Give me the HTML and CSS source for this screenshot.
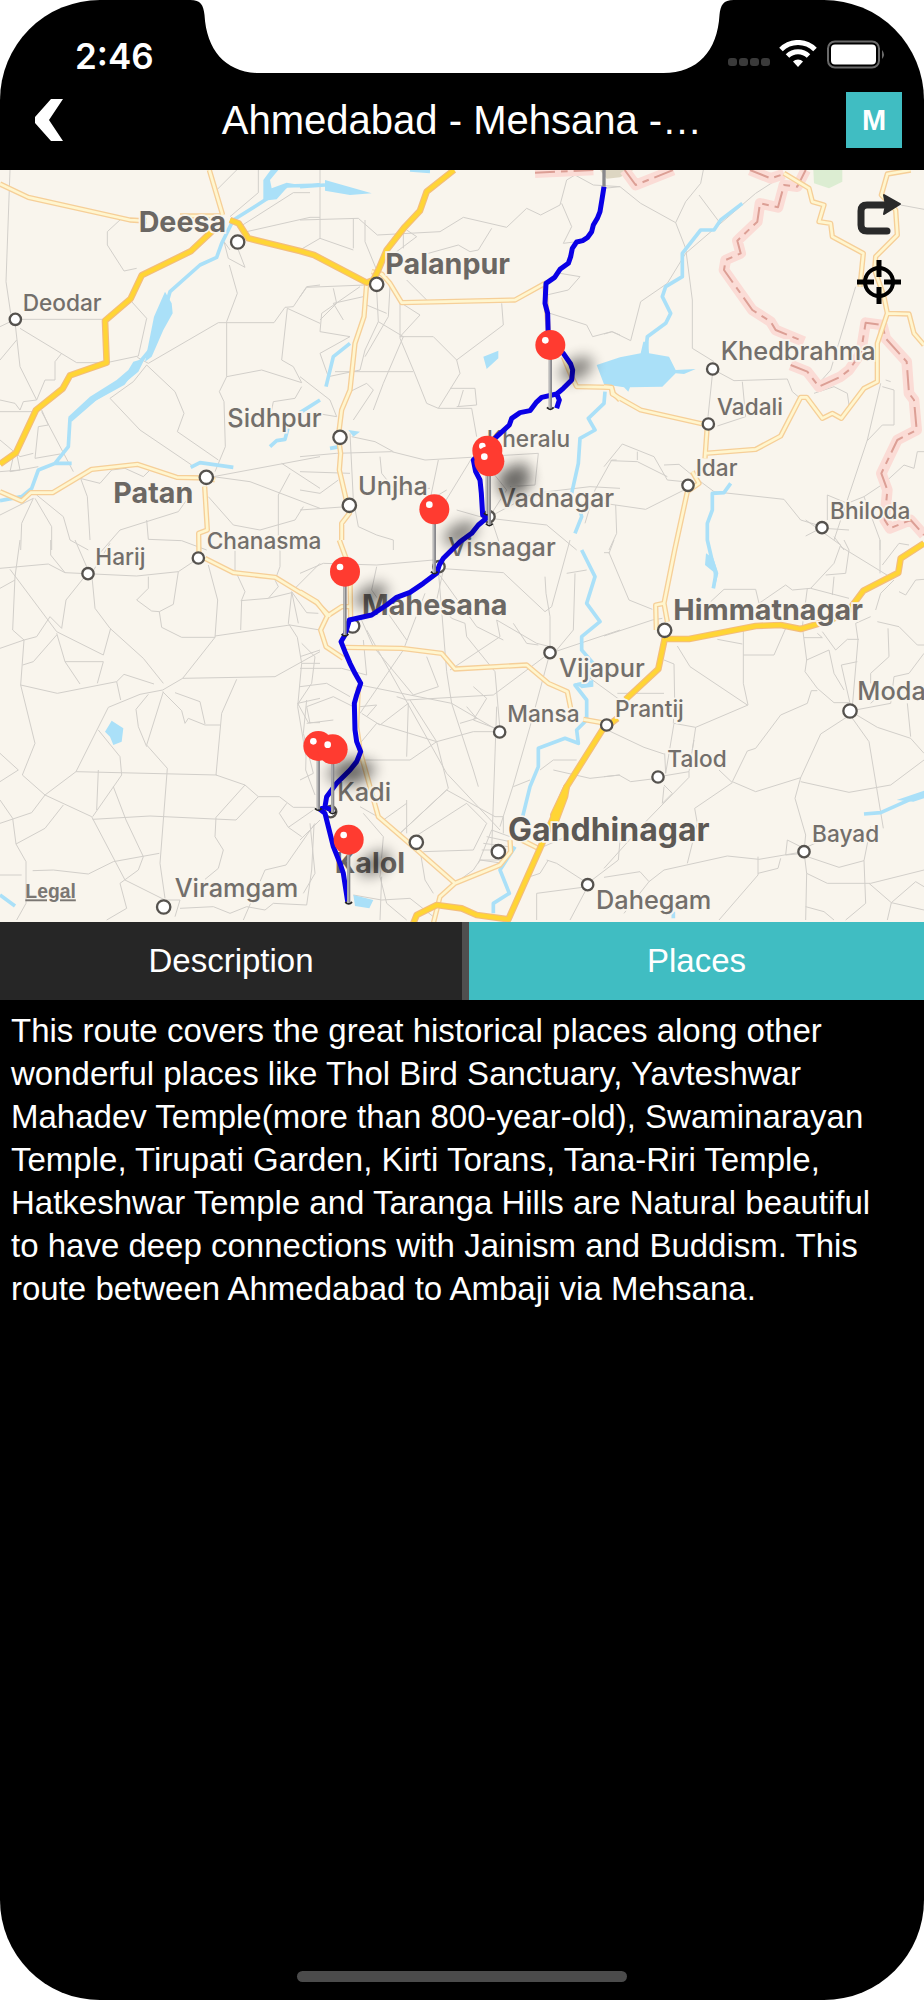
FILE: index.html
```
<!DOCTYPE html>
<html lang="en">
<head>
    <meta charset="UTF-8">
    <meta name="viewport" content="width=device-width, initial-scale=1.0">
    <title>Ahmedabad - Mehsana - Ambaji</title>
    <link rel="stylesheet" href="styles.css">
</head>
<body>
<div class="phone">
    <!-- Notch -->
    <svg class="notch" viewBox="190 0 543 74" aria-hidden="true">
        <path d="M190 0C200 0 203 5 204 15C206 51 226 73 259 73H663C697 73 717 51 719 15C720 5 723 0 733 0Z"/>
    </svg>

    <!-- Status bar -->
    <div class="status">
        <span class="time">2:46</span>
        <svg class="status-icons" width="160" height="32" viewBox="0 0 160 32" aria-hidden="true">
            <g fill="#3a3a3a">
                <rect x="2" y="18" width="9" height="8" rx="3"/>
                <rect x="13" y="18" width="9" height="8" rx="3"/>
                <rect x="24" y="18" width="9" height="8" rx="3"/>
                <rect x="35" y="18" width="9" height="8" rx="3"/>
            </g>
            <g fill="none" stroke="#fff" stroke-width="5">
                <path d="M55 9.500A24 24 0 0 1 89 9.500"/>
                <path d="M61.500 16A15 15 0 0 1 82.500 16"/>
            </g>
            <path fill="#fff" d="M67 21.500A7 7 0 0 1 77 21.500L72 27Z"/>
            <rect x="102" y="1.500" width="51" height="26" rx="7" fill="none" stroke="#6a6a6a" stroke-width="2"/>
            <rect x="105" y="4.500" width="45" height="20" rx="4" fill="#fff"/>
            <path fill="#6a6a6a" d="M156 10Q160 14.500 156 19Z"/>
        </svg>
    </div>

    <!-- Navigation bar -->
    <header class="nav">
        <button class="back" aria-label="Back">
            <svg width="30" height="44" viewBox="0 0 30 44"><path fill="#fff" d="M17 1H29L15 22L29 43H17L1 25V19Z"/></svg>
        </button>
        <h1>Ahmedabad - Mehsana -…</h1>
        <button class="mode">M</button>
    </header>

    <main>
        <div class="map">
            <svg class="map-canvas" viewBox="0 0 2772 2256">
                <defs>
                    <filter id="blur" x="-80%" y="-100%" width="260%" height="300%"><feGaussianBlur stdDeviation="20"/></filter>
                    <g id="pin">
                        <ellipse class="shadow" cx="78" cy="-118" rx="54" ry="30" transform="rotate(-28 78 -118)"/>
                        <path class="tip" d="M-10 -3Q0 8 10 -3"/>
                        <path class="stick" d="M0 -150V0"/>
                        <path class="shine" d="M-2 -150V0"/>
                        <circle class="head" cy="-190" r="45"/>
                        <circle cx="-15" cy="-204" r="10" fill="#fff"/>
                    </g>
                    <g id="secondary">
                        <path d="M0 42L85 82L390 150L440 153M628 0L668 135M540 138H660M0 965L65 993L92 968H158L275 898L412 883L530 922L620 924L645 930M614 950L622 1080L596 1090L597 1160"/>
                        <g transform="translate(900 0)">
                            <path d="M200 340L192 440L165 520L150 660L125 720L115 800L122 850L118 900L148 1030L125 1060V1110M215 305L245 312L270 340L305 398L645 390L735 340L738 400L745 480M790 560L815 620L830 650L935 652L940 670L960 690"/>
                        </g>
                        <g transform="translate(1812 0)">
                            <path d="M0 650L22 652L25 672L110 720L310 765L303 865M303 850L455 838L530 798L590 682H608L655 745L685 730L712 745L780 655L820 635V520L850 430L915 432L930 490L960 525M850 430L840 380L812 300L815 260L880 195L875 120L832 75L850 12L920 0M540 10L615 55L625 95L660 105L645 155L680 160L685 200L778 250L768 350M265 905L285 940L250 965L212 1140L180 1300L190 1355M180 1300L155 1305L157 1380"/>
                        </g>
                        <path d="M615 1165L700 1208L826 1222L950 1298L990 1340"/>
                        <g transform="translate(900 1110)">
                            <path d="M0 155L50 185L82 228L62 270L78 320L130 355M82 228L125 200H150M118 0L140 60L150 100L152 240M135 322L305 325L425 340L465 387L680 375L745 430L802 455L812 505M850 538L905 548M175 440L170 560L182 640L235 830L345 925L465 1030L600 975L632 935L630 900M465 1030L420 1070L400 1150M665 900L715 925"/>
                        </g>
                    </g>
                    <g id="highways">
                        <path d="M0 882L48 848L108 720L188 656L210 616L320 578L315 452L392 386L425 316L572 244L640 180M690 150L716 160L745 205L900 243L942 255L1100 338L1120 330L1135 300L1160 240L1215 170L1260 122L1280 65L1362 0"/>
                        <g transform="translate(1812 1110)">
                            <path d="M960 10L890 55L883 98L778 152L735 210L680 240L590 267L530 255L455 258L255 297H182L163 387L65 478M40 535L-5 570L-112 740L-192 925L-287 1138L-382 1125L-427 1105L-502 1095L-562 1125L-572 1150"/>
                        </g>
                        <path d="M1700 1850L1660 1935L1665 1960L1695 1880Z"/>
                    </g>
                    <g id="border">
                        <path d="M1605 8L1780 0M1874 0L1907 45L2020 0M2250 0L2312 25L2352 12M2417 0L2392 50L2352 45L2334 112L2280 100L2272 155L2212 212L2222 250L2177 270L2172 300L2257 420L2312 455L2327 480L2412 515M2372 585L2422 605L2457 650L2522 620L2547 600L2582 550L2597 458L2647 465L2657 505L2720 575L2727 670L2742 690L2750 780L2692 810L2644 910L2662 960L2654 1050L2670 1075L2732 1050L2772 1095"/>
                    </g>
                </defs>

                <!-- Parks -->
                <path fill="#dcedd2" d="M2440 0H2527V35L2487 55L2442 40Z"/>
                <path fill="#ddd6c2" d="M1800 0H1900L1860 22L1820 26Z"/>

                <!-- Minor roads -->
                <g class="minor">
                    <path d="M30 0L18 335L32 430M46 465L60 590L110 690M0 725H108M0 470L46 448H315M60 475L230 578L320 578L415 558L440 445L395 395M362 148L322 185V225L372 303L410 295M775 0V68L690 140M710 0L650 60M720 170L880 68H930M740 185L930 142H960M690 240L672 215L685 265L735 292L715 240M688 285L712 370L680 455V620L658 665L672 695L676 830L645 905M680 458H655L445 580L412 562M680 458H822L855 412L880 410L920 350L960 345M440 585L525 665L552 730L532 785L655 870M440 585L400 635L330 685L420 780L575 885M680 620L785 600L905 638L880 590L845 570L862 415L960 460M905 650L885 685L820 695L815 720M640 920L960 860M640 920L750 935L960 1015M845 880L960 955M870 910L835 975V1140M910 1010L885 1050L780 1080L700 1065L625 980M560 990L535 1025L360 1080L290 1160M440 1050L445 1108L545 1112L620 1140M0 1035L100 985L65 1060L62 1140M105 985L155 1070V1140M110 975L190 1040L210 1110L265 1140M240 920L262 980L270 1110M50 510L0 570M125 725L220 905M105 865L115 770L145 765L125 720M105 865L180 852M0 810L60 860L100 850M50 850L60 900L0 905M40 860L30 905L60 900L115 890M0 690L45 700L60 720L70 695L110 690L135 630H165V575L185 550M240 925L300 940L335 900L375 895L430 920L450 900"/>
                    <g transform="translate(900 0)">
                        <path d="M60 0V205L0 240M60 205L160 240M0 150L175 145L232 195L420 185L490 142L620 172L680 115L722 135L780 105L800 30L825 15L880 45L960 50M160 145V235M195 150V215L230 300M320 180L350 200L290 245L260 285M310 180V235M575 175L535 240L510 245L475 225L385 250M785 100L815 170L790 220L830 215M0 380L20 352L195 345M180 350L65 430L60 485L150 500M100 355L110 400L60 450M190 380L100 400L130 450M230 360L235 455L310 500L250 640L220 720M270 350L265 440L195 560M300 400V505L342 605L380 700L415 715L515 715L530 800M320 330L380 390M305 400L360 435L300 500M200 405L260 430M300 500H400L470 570L480 610L415 715M470 570L610 465L605 400M740 375L805 360L840 320L780 310M750 430L860 465L878 500L935 485L960 495M450 655H525L530 705L470 710M490 660L475 710M105 605H340M60 550L150 500M60 550L85 620L180 600L195 540L235 455M0 620L90 690L110 740L50 730M150 665L200 640L220 660L160 750M0 860L110 850L275 845L375 870L715 850L705 945L630 950M150 790L160 990L175 1070L230 1095L280 1110V1140M155 800L225 815L280 845M415 870L390 990L440 960M515 865L420 1020M0 905L150 910M0 960L60 970L115 930M0 1020L140 1010M240 860L245 910L285 960L390 955M570 1040L700 970L870 950L960 955M570 1045L740 1065L830 1140M575 1050L605 1140M575 1050L470 1020M575 1030L620 960L580 910M950 870H935L885 960L855 1060"/>
                    </g>
                    <g transform="translate(1812 0)">
                        <path d="M0 55L48 50L110 100L215 158L245 235L265 390V535L330 575M540 15L455 70L245 250L190 340L110 395L80 512L25 485L0 492M215 158L245 95L290 40L298 0M285 75L345 155M755 350L680 600L640 645M890 105L960 118M325 615L312 740M340 605L390 632L550 627L565 665L585 682M415 635L425 740L340 768M630 670L690 650L730 670L735 705M830 640L790 810L690 1110M835 650L870 660V765H835L790 812M0 890L55 822L150 860L190 930L240 935M20 872L100 875L190 920M100 845V870M180 885L225 883L270 920L330 965L540 988L590 1050L640 1065M250 955L125 1018L0 1000M35 1005L38 1090L15 1140M960 845H940L930 895L900 885L840 940L780 980L730 1000L670 975V1050M660 1075L735 1080M640 1080L605 1098M690 1100L720 1140M780 980L828 1110V1140M845 630L860 635"/>
                    </g>
                    <g transform="translate(0 1110)">
                        <path d="M60 0L45 110L38 270L72 300L110 290L150 230L185 265L198 180L262 100M152 0V45L195 98L410 108L535 95L595 55M225 0L262 85M330 10L275 100L285 205L330 265L430 355L490 430M0 85L145 72L195 98M30 88L170 275L310 345L332 265M0 145L45 120M0 325L72 300L62 435L105 610L67 705L135 765L275 830L375 1020L495 1080M170 280L195 365L240 432M195 365H310L292 430M68 375L100 365L170 285M62 435L172 460L350 425L362 480M350 425L372 403L462 432M445 110V145L410 180L455 213L478 215L520 193L535 95M478 215L485 262L545 292H645L653 180L625 75M645 292L548 415L488 450L420 463L325 502L228 695L135 765L95 818L0 850M645 288L870 255L960 270M548 415L825 410L960 335M710 418L665 520L648 705L735 735L775 770H838L880 802H945M488 455L545 512L555 550L565 535L615 555H660M525 458L600 485L615 552M490 455L440 615L502 685L480 970L495 1075M445 463L408 508L415 560L440 620M228 695L650 705M295 570L360 650L365 705L278 830M295 690L290 810M278 838L450 828L708 840L775 770M735 735L648 832L645 890L670 930L655 985L615 1018M340 740L378 840L430 950L415 990L360 1030L380 1105L320 1140M0 640L55 690L0 725M190 795L135 865L48 912L38 835L0 780M48 912L78 965V1090L50 1140M0 1005H65M98 992L160 990L265 1002L340 965L478 940M705 10V90L735 155L725 180L722 270M722 182L805 175L875 158L865 250L892 292L905 370L893 500L918 650L917 690L945 765M840 0V80L825 120L835 140L805 175M875 155L895 250M960 70L880 150M875 155L920 218L955 220M905 370H960M893 490L960 475M893 490L925 548H960M905 310L945 350L935 430L895 490M865 862L905 890M865 862L940 810M865 862L838 820L860 790M945 850L858 975L795 990L730 1140M942 855L935 990L920 1095L820 1090L795 1110L740 1100L690 1120L640 1100L540 1105M500 1080H540L525 1130"/>
                    </g>
                    <g transform="translate(900 1110)">
                        <path d="M415 85L610 98L735 215L755 200L810 0M430 90L410 180L455 235L495 250L500 290L585 395L600 570M415 90L440 395L455 490L520 690L535 740M450 390L600 290L590 240L710 310L750 320M610 300L530 260L415 100M750 320V230L738 160L735 110M750 338L580 465L320 480L290 470M590 500L575 930M600 575L455 490L180 435M750 338L690 560L640 735L600 860M750 340L960 270M860 90L800 100M770 330L820 270L825 100M230 80L215 150L320 300M0 100L70 70L230 75L400 60M375 160L310 330L180 520M200 270L440 700L600 870M180 230L220 320L340 465L415 440L380 350M0 385H125L200 405L190 300M0 350L60 330M0 440L80 430L150 470M30 550L20 500L100 470L160 500M20 550L100 540M185 520L240 555L325 490L320 650M180 500L230 495L200 530M180 610L230 550L410 605L520 575H600M410 605L445 745L300 880M330 480L410 605L330 660H190M300 880L440 750L585 830L610 830V880M345 890L500 790L560 850L520 930L370 935M320 780V880M360 930L375 1020L400 1060M465 1030L520 990L540 960L600 960M535 970L575 870L630 890M545 930H620M550 910L625 920M560 890L630 905M540 960L610 970M190 820L250 890L240 1010L260 1090L320 1140M0 900L60 840M30 850L45 1000L10 1060M180 800L250 840L320 790M0 720L40 700L10 580L20 480M245 1080L330 1075L400 1130M245 1010L240 1140M160 1065L245 1080M740 960L770 970L863 1030M745 960L720 1000L690 1010M863 1030L955 960L960 900M863 1040L810 1140M863 1040L710 1060V1140M720 690L760 660H830M760 690L870 715L960 705M640 740L690 720M520 440L560 475L520 540L600 570M480 550L530 535L500 500M640 250L680 310L715 315M850 400L960 480M730 920L800 890L870 850"/>
                    </g>
                    <g transform="translate(1812 1110)">
                        <path d="M0 38H15L75 180L145 208M0 288L145 240L175 235M15 40L30 0M320 185L360 148H455L465 190L545 135L565 150L620 145L690 70L710 15L605 -60M710 20L865 115M665 105L725 100L735 30L720 0M690 110L685 165M620 145L735 175M610 145L595 260L608 360L603 395L640 445L690 488H735M418 270V430L432 495L275 562L210 550L185 700M340 298L415 312M418 345H510L545 265M220 318L258 380L430 495M180 360L210 372L212 480L208 550M10 570L120 622L180 642M165 710L255 695L275 562M160 715L80 725L45 705L0 710M255 695V712L130 840L0 985M0 1012L108 995L135 1025L180 990L370 948L465 958L600 935M135 1025L60 1120M385 725L455 755L590 713L650 582L738 525L795 605L838 865M345 690L385 728L272 805L280 850L250 970M385 725L430 633L455 625L530 525L610 490L622 452H640M738 513L820 562L920 595L960 640M738 513L860 490L870 410L915 400L960 340M745 500L762 300L755 250L800 230M738 490L712 375L760 365M720 450L690 400L675 330L608 360M600 293H655L640 280M655 275L695 330L730 298H765M590 725L735 757L860 735L960 660M590 713L573 775L605 885L600 935L608 1000L605 1140M608 1000L670 1030H800L960 990M600 940L545 945L550 900L600 925L655 900M610 950L705 982L780 962L800 860M780 962L785 1090L725 1140M462 950V1005L345 1140M462 1000L522 985L530 955M795 1030L862 1088L850 1140M862 1088L935 1025L960 1040M605 1100L660 1115L690 1140M820 245L885 260L940 315H960M852 265L855 350L800 400V430M885 155L905 165L935 120L960 118M870 120L830 160L815 210M828 0V100M835 75L885 10L915 15M180 740L175 790L205 760L180 735M910 490L920 590M182 640L185 700M855 440L800 490M40 460L180 460M270 600L265 630M862 1088L960 1110"/>
                    </g>
                </g>

                <!-- Rivers and lakes -->
                <g class="river">
                    <path d="M960 45L860 48L780 100L700 150L665 220L650 262L600 285L510 365L480 470L450 540L400 600L370 640L280 690L210 745L205 830L165 880L115 900L95 955L65 980L0 992M165 880L215 880M572 892L600 878L700 892M960 690L900 728M865 770L855 808L830 812L810 830M900 50L975 45M1230 0L1290 4M1050 520L1000 560L978 650M990 835L1020 830M1815 665L1812 700L1765 745L1785 780L1740 805L1735 880L1715 970M1740 1020L1745 1040L1725 1090"/>
                    <path d="M1937 550L1942 500L1997 460L2012 430L1987 380L1997 350L2047 320V250L2102 180H2142L2162 150L2227 100M2192 940L2172 968L2137 970V1020L2122 1060V1110L2136 1170L2148 1210L2140 1255M2592 1932L2642 1928L2772 1870"/>
                    <path d="M1745 1140L1785 1220L1760 1300L1800 1355L1745 1400V1440L1780 1480L1760 1540L1725 1545L1760 1590V1650L1730 1680L1735 1720L1695 1705L1615 1735V1790L1590 1850L1568 1940M1545 2030L1500 2100L1528 2170L1480 2200V2230M0 2175L45 2208M2020 2225V2245"/>
                </g>
                <g class="lake">
                    <path d="M812 0L790 30V92L830 88L862 52L900 45L860 38L815 55L810 30L835 0ZM495 365L515 400L518 430L490 480L455 560L435 575L450 500L462 440ZM435 565L415 605L375 638L290 690L215 755L205 740L270 680L350 630L385 600L400 575ZM975 30L1115 70L1050 75L975 62ZM1450 560L1495 542V565L1460 597ZM1045 780L1080 785L1060 800ZM1790 585L1860 562L1922 550L1930 515H1945L1947 550L2007 560L2027 600L2087 597L2052 612L2027 610L1987 650L1890 652L1885 665L1872 652L1812 643Z"/>
                    <path d="M335 1652L370 1675L365 1715L340 1725L330 1700L315 1685ZM1060 2175L1120 2190L1108 2215L1065 2208ZM2118 1150L2140 1165L2155 1210L2145 1250L2140 1205L2115 1185ZM1725 1540L1780 1530V1550L1745 1555ZM2690 1890L2772 1862V1885L2740 1895Z"/>
                </g>

                <use href="#border" class="border-halo"/>
                <use href="#border" class="border-line"/>
                <use href="#secondary" class="secondary-casing"/>
                <use href="#secondary" class="secondary-fill"/>
                <use href="#highways" class="highway-casing"/>
                <use href="#highways" class="highway-fill"/>

                <!-- Towns -->
                <g class="town">
                    <circle cx="713" cy="216" r="20"/>
                    <circle cx="619" cy="922" r="20"/>
                    <circle cx="1130" cy="343" r="20"/>
                    <circle cx="1020" cy="802" r="20"/>
                    <circle cx="1048" cy="1006" r="20"/>
                    <circle cx="491" cy="2211" r="20"/>
                    <circle cx="1058" cy="1368" r="20"/>
                    <circle cx="1249" cy="2017" r="20"/>
                    <circle cx="1495" cy="2045" r="20"/>
                    <circle cx="1994" cy="1381" r="20"/>
                    <circle cx="2550" cy="1623" r="20"/>
                    <circle cx="46" cy="448" r="17"/>
                    <circle cx="2138" cy="597" r="17"/>
                    <circle cx="2125" cy="762" r="17"/>
                    <circle cx="2064" cy="946" r="17"/>
                    <circle cx="2466" cy="1073" r="17"/>
                    <circle cx="264" cy="1211" r="17"/>
                    <circle cx="595" cy="1164" r="17"/>
                    <circle cx="1317" cy="1190" r="17"/>
                    <circle cx="1467" cy="1040" r="17"/>
                    <circle cx="1650" cy="1448" r="17"/>
                    <circle cx="1499" cy="1686" r="17"/>
                    <circle cx="1820" cy="1665" r="17"/>
                    <circle cx="992" cy="1925" r="17"/>
                    <circle cx="1763" cy="2144" r="17"/>
                    <circle cx="1974" cy="1821" r="17"/>
                    <circle cx="2412" cy="2045" r="17"/>
                </g>
                <g class="label small">
                    <text x="68" y="422">Deodar</text>
                    <text x="620" y="1138">Chanasma</text>
                    <text x="1460" y="832">Kheralu</text>
                    <text x="2151" y="735">Vadali</text>
                    <text x="2087" y="918">Idar</text>
                    <text x="2490" y="1048">Bhiloda</text>
                    <text x="286" y="1185">Harij</text>
                    <text x="1522" y="1656">Mansa</text>
                    <text x="1845" y="1640">Prantij</text>
                    <text x="2002" y="1792">Talod</text>
                    <text x="2436" y="2017">Bayad</text>
                </g>
                <g class="label medium">
                    <text x="682" y="770">Sidhpur</text>
                    <text x="1074" y="976">Unjha</text>
                    <text x="1494" y="1012">Vadnagar</text>
                    <text x="1345" y="1158">Visnagar</text>
                    <text x="2162" y="570">Khedbrahma</text>
                    <text x="524" y="2180">Viramgam</text>
                    <text x="1677" y="1522">Vijapur</text>
                    <text x="1012" y="1892">Kadi</text>
                    <text x="2572" y="1590">Moda</text>
                    <text x="1788" y="2217">Dahegam</text>
                </g>
                <g class="label large">
                    <text x="416" y="186">Deesa</text>
                    <text x="340" y="998">Patan</text>
                    <text x="1156" y="313">Palanpur</text>
                    <text x="1086" y="1336">Mahesana</text>
                    <text x="1004" y="2108">Kalol</text>
                    <text x="2020" y="1350">Himmatnagar</text>
                </g>
                <g class="label capital">
                    <text x="1524" y="2012">Gandhinagar</text>
                </g>
                <a href="#legal"><text class="legal" x="76" y="2185">Legal</text></a>

                <!-- Route line -->
                <path class="route" d="M1812 50L1806 88L1800 125L1792 145L1780 165L1775 185L1762 203L1748 212L1730 216L1717 235L1712 260L1705 280L1680 298L1664 322L1638 340L1635 400L1643 430L1645 510L1690 550L1712 582L1718 600L1715 630L1690 655L1670 672L1678 690L1670 715M1670 672L1625 682L1608 698L1590 722L1560 728L1535 745L1528 765L1490 800L1420 870L1427 905L1440 930L1444 970L1448 1035L1465 1040L1435 1065L1415 1090L1380 1115L1330 1165L1318 1185L1310 1210L1270 1240L1230 1267L1190 1282L1160 1305L1115 1335L1048 1350L1035 1395L1023 1415L1035 1445L1050 1480L1065 1510L1082 1540L1070 1575L1063 1600L1065 1680L1070 1715L1082 1745L1070 1775L1050 1800L1010 1840L980 1880L975 1910L1000 1925M975 1910L960 1918L975 1930L985 1970L1000 2030L1020 2080L1030 2110L1043 2195"/>

                <!-- Pins -->
                <path class="stick" d="M1812 0V50"/>
                <use href="#pin" x="1651" y="715"/>
                <use href="#pin" x="1462" y="1032"/>
                <use href="#pin" x="1468" y="1064"/>
                <use href="#pin" x="1303" y="1208"/>
                <use href="#pin" x="1035" y="1395"/>
                <use href="#pin" x="955" y="1918"/>
                <use href="#pin" x="998" y="1928"/>
                <use href="#pin" x="1046" y="2199"/>
            </svg>
            <div class="map-tools">
                <button aria-label="Directions">
                    <svg width="46" height="44" viewBox="0 0 46 44">
                        <path fill="none" stroke="#2a2a2a" stroke-width="7" stroke-linecap="round" stroke-linejoin="round" d="M31 38H11Q5 38 5 32V18Q5 12 11 12H30"/>
                        <path fill="#2a2a2a" stroke="#2a2a2a" stroke-width="2" stroke-linejoin="round" d="M28 2L44 11L28 21L30 12Z"/>
                    </svg>
                </button>
                <button aria-label="Locate">
                    <svg width="46" height="46" viewBox="0 0 46 46" fill="none" stroke="#000">
                        <circle cx="23" cy="23" r="14" stroke-width="4"/>
                        <path stroke-width="5" d="M23 1V18M23 28V45M1 23H18M28 23H45"/>
                    </svg>
                </button>
            </div>
        </div>

        <nav class="tabs">
            <button class="tab">Description</button>
            <button class="tab active">Places</button>
        </nav>

        <p class="description">This route covers the great historical places along other wonderful places like Thol Bird Sanctuary, Yavteshwar Mahadev Temple(more than 800-year-old), Swaminarayan Temple, Tirupati Garden, Kirti Torans, Tana-Riri Temple, Hatkeshwar Temple and Taranga Hills are Natural beautiful to have deep connections with Jainism and Buddism. This route between Ahmedabad to Ambaji via Mehsana.</p>
    </main>

    <div class="home-bar"></div>
</div>
</body>
</html>
```
FILE: styles.css
```
* {
    box-sizing: border-box;
}
body {
    margin: 0;
    background: #fff;
    font-family: "Liberation Sans", Arial, sans-serif;
}
button {
    padding: 0;
    border: none;
    background: none;
    color: #fff;
    font-family: inherit;
    cursor: pointer;
}
svg {
    display: block;
}
.phone {
    position: relative;
    display: flex;
    flex-direction: column;
    min-height: 100vh;
    background: #000;
    color: #fff;
    border-radius: 100px;
    overflow: hidden;
}
/* Notch sits over the status bar */
.notch {
    position: absolute;
    top: 0;
    left: 50%;
    width: 543px;
    transform: translateX(-50%);
    fill: #fff;
}
.status {
    display: flex;
    justify-content: space-between;
    align-items: center;
    padding: 32px 38px 0 75px;
    height: 80px;
}
.time {
    font-family: Inter, sans-serif;
    font-size: 35px;
    font-weight: 600;
}
.nav {
    display: flex;
    justify-content: space-between;
    align-items: center;
    padding: 0 22px 10px 34px;
    height: 90px;
}
.nav h1 {
    margin: 0;
    font-size: 40px;
    font-weight: normal;
}
.back {
    width: 44px;
}
.mode {
    width: 56px;
    height: 56px;
    background: #40bdc2;
    font-size: 29px;
    font-weight: bold;
}

/* Map */
.map {
    position: relative;
    background: #f9f5ed;
}
.map-canvas {
    width: 100%;
    height: auto;
}
.minor,
.river,
.route {
    fill: none;
    stroke-linejoin: round;
}
.minor {
    stroke: #d2cfca;
    stroke-width: 3;
}
.river {
    stroke: #aae0f8;
    stroke-width: 11;
}
.lake {
    fill: #aae0f8;
}
.border-halo,
.border-line,
.secondary-casing,
.secondary-fill,
.highway-casing,
.highway-fill {
    fill: none;
    stroke-linejoin: round;
}
.border-halo {
    stroke: #fbdcd6;
    stroke-width: 32;
}
.border-line {
    stroke: #dc9f95;
    stroke-width: 6;
    stroke-dasharray: 60 18 20 18;
}
.secondary-casing {
    stroke: #f6cf98;
    stroke-width: 16;
}
.secondary-fill {
    stroke: #fff6cf;
    stroke-width: 8;
}
.highway-casing {
    stroke: #f3bd7c;
    stroke-width: 20;
}
.highway-fill {
    stroke: #ffd535;
    stroke-width: 13;
}
.town {
    fill: #fff;
    stroke: #55524e;
    stroke-width: 7;
}
.label {
    font-family: Inter, sans-serif;
    font-weight: 500;
    fill: #736f6b;
    stroke: #f9f5ed;
    stroke-width: 10;
    paint-order: stroke;
}
.small {
    font-size: 68px;
}
.medium {
    font-size: 76px;
}
.large {
    font-size: 86px;
    font-weight: 700;
    fill: #6b6763;
}
.capital {
    font-size: 96px;
    font-weight: 700;
    fill: #5c5854;
}
.legal {
    font-size: 58px;
    font-weight: bold;
    fill: #7b7773;
    text-decoration: underline;
}
.route {
    stroke: #0a00e6;
    stroke-width: 15;
}
.shadow {
    fill: #000;
    opacity: 0.45;
    filter: url(#blur);
}
.tip {
    fill: none;
    stroke: #222;
    stroke-width: 6;
}
.stick {
    stroke: #88888c;
    stroke-width: 10;
}
.shine {
    stroke: #bbb;
    stroke-width: 4;
}
.head {
    fill: #ff3b30;
}
.map-tools {
    position: absolute;
    top: 23px;
    right: 22px;
    display: flex;
    flex-direction: column;
    gap: 22px;
}

/* Tabs */
.tabs {
    display: flex;
}
.tab {
    width: 50%;
    height: 78px;
    background: #262626;
    font-size: 33px;
}
.tab.active {
    background: #40bdc2;
    border-left: 7px solid #4f4f4f;
}
.description {
    margin: 0;
    padding: 9px 24px 9px 11px;
    font-size: 33px;
    line-height: 43px;
}
.home-bar {
    width: 330px;
    height: 11px;
    margin: auto auto 18px;
    border-radius: 6px;
    background: #4b4b4b;
}
```
